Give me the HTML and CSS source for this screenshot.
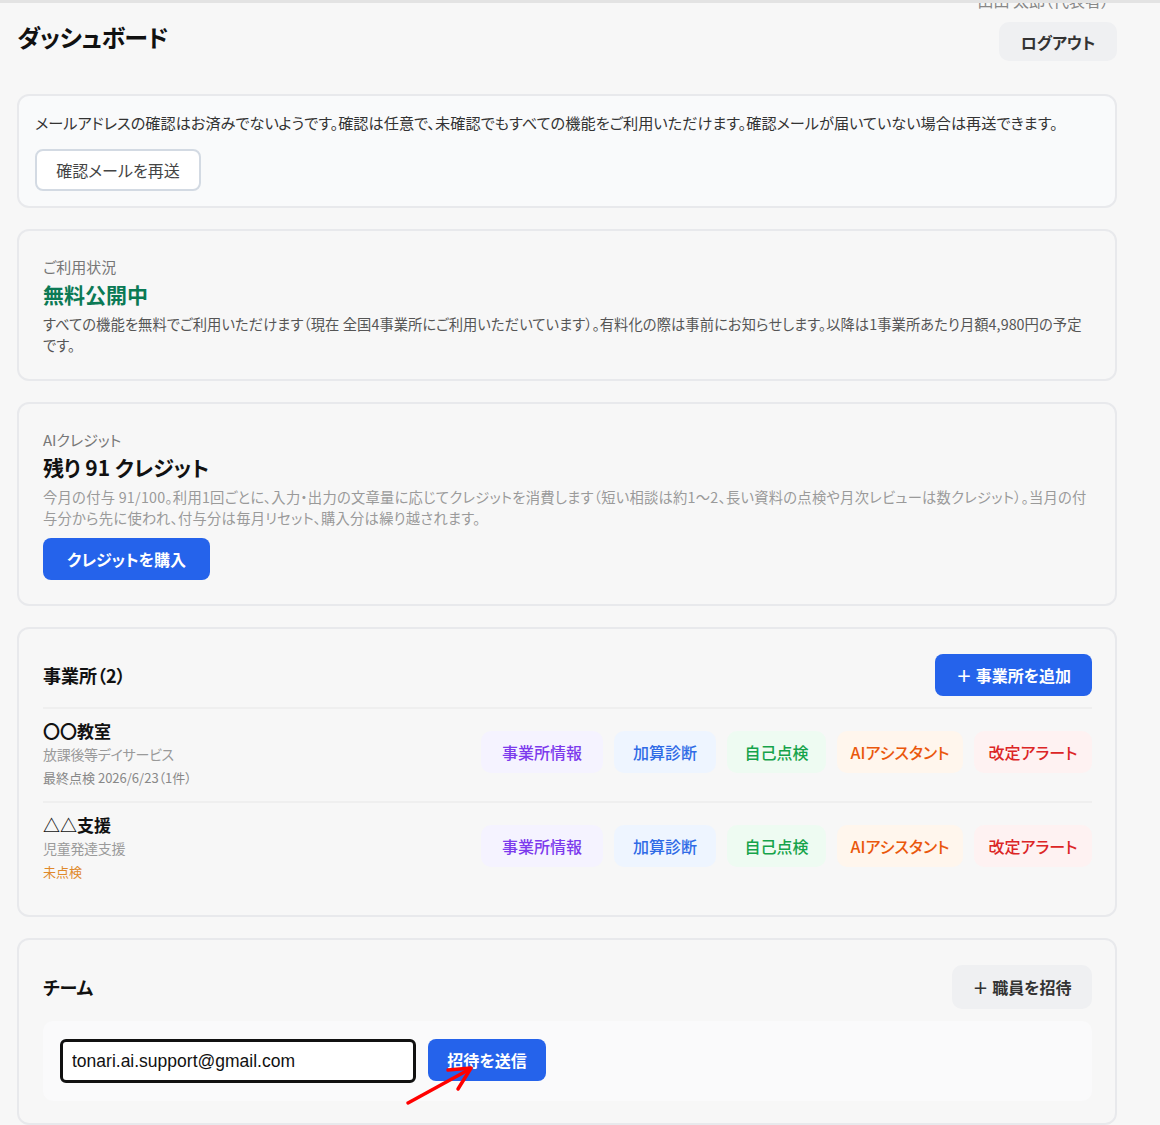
FILE: index.html
```html
<!DOCTYPE html>
<html lang="ja">
<head>
<meta charset="utf-8">
<title>ダッシュボード</title>
<link rel="stylesheet" href="styles.css">
</head>
<body>
<div class="page">
  <header class="header">
    <h1 class="title">ダッシュボード</h1>
    <div class="user">
      <div class="user-name">山田 太郎（代表者）</div>
      <button class="btn btn-gray logout">ログアウト</button>
    </div>
  </header>

  <section class="card card-notice">
    <p class="notice-text">メールアドレスの確認はお済みでないようです。確認は任意で、未確認でもすべての機能をご利用いただけます。確認メールが届いていない場合は再送できます。</p>
    <button class="btn btn-outline">確認メールを再送</button>
  </section>

  <section class="card">
    <div class="label">ご利用状況</div>
    <div class="status">無料公開中</div>
    <p class="desc desc-dark">すべての機能を無料でご利用いただけます（現在 全国4事業所にご利用いただいています）。有料化の際は事前にお知らせします。以降は1事業所あたり月額4,980円の予定です。</p>
  </section>

  <section class="card">
    <div class="label">AIクレジット</div>
    <div class="credits">残り 91 クレジット</div>
    <p class="desc desc-light">今月の付与 91/100。利用1回ごとに、入力・出力の文章量に応じてクレジットを消費します（短い相談は約1〜2、長い資料の点検や月次レビューは数クレジット）。当月の付与分から先に使われ、付与分は毎月リセット、購入分は繰り越されます。</p>
    <button class="btn btn-blue buy">クレジットを購入</button>
  </section>

  <section class="card card-offices">
    <div class="section-head">
      <h2 class="section-title">事業所（2）</h2>
      <button class="btn btn-blue">＋ 事業所を追加</button>
    </div>
    <div class="office">
      <div class="office-info">
        <div class="office-name">〇〇教室</div>
        <div class="office-type">放課後等デイサービス</div>
        <div class="office-meta">最終点検 2026/6/23（1件）</div>
      </div>
      <div class="pills">
        <span class="pill pill-purple">事業所情報</span>
        <span class="pill pill-blue">加算診断</span>
        <span class="pill pill-green">自己点検</span>
        <span class="pill pill-orange">AIアシスタント</span>
        <span class="pill pill-red">改定アラート</span>
      </div>
    </div>
    <div class="office">
      <div class="office-info">
        <div class="office-name">△△支援</div>
        <div class="office-type">児童発達支援</div>
        <div class="office-meta meta-warn">未点検</div>
      </div>
      <div class="pills">
        <span class="pill pill-purple">事業所情報</span>
        <span class="pill pill-blue">加算診断</span>
        <span class="pill pill-green">自己点検</span>
        <span class="pill pill-orange">AIアシスタント</span>
        <span class="pill pill-red">改定アラート</span>
      </div>
    </div>
  </section>

  <section class="card card-team">
    <div class="section-head">
      <h2 class="section-title">チーム</h2>
      <button class="btn btn-gray invite">＋ 職員を招待</button>
    </div>
    <div class="invite-box">
      <input class="invite-input" type="text" value="tonari.ai.support@gmail.com">
      <button class="btn btn-blue send">招待を送信</button>
    </div>
    <svg class="arrow" width="80" height="50" viewBox="0 0 80 50">
      <path d="M4 46 L66 12" stroke="#f00" stroke-width="3.5" fill="none" stroke-linecap="round"/>
      <path d="M44 13 L67 11 L54 32" stroke="#f00" stroke-width="3.5" fill="none" stroke-linecap="round" stroke-linejoin="round"/>
    </svg>
  </section>
</div>
</body>
</html>
```

FILE: styles.css
```css
* { box-sizing: border-box; }
html, body { margin: 0; padding: 0; }
body {
  background: #f7f7f7;
  border-top: 3px solid #e3e3e3;
  font-family: "Noto Sans CJK JP", "Noto Sans", sans-serif;
  font-feature-settings: "palt";
  color: #222;
  overflow: hidden;
  height: 1125px;
}
.page {
  width: 1100px;
  margin-left: 17px;
  display: flex;
  flex-direction: column;
  gap: 21px;
}
.header {
  display: flex;
  justify-content: space-between;
  align-items: flex-start;
  height: 70px;
}
.title {
  margin: 17px 0 0 0;
  font-size: 24px;
  font-weight: 700;
  line-height: 34px;
  color: #111;
  letter-spacing: -0.5px;
}
.user {
  display: flex;
  flex-direction: column;
  align-items: flex-end;
}
.user-name {
  margin-top: -13px;
  margin-right: 8px;
  font-size: 16px;
  line-height: 20px;
  color: #888;
}
.btn {
  font-family: inherit;
  font-feature-settings: "palt";
  border: none;
  border-radius: 8px;
  cursor: pointer;
  font-weight: 700;
  font-size: 16px;
  padding: 0 18px;
  height: 42px;
  white-space: nowrap;
}
.btn-gray {
  background: #eff0f2;
  color: #333;
  border-radius: 10px;
}
.logout {
  margin-top: 12px;
  height: 39px;
  width: 118px;
}
.btn-blue {
  background: #2563eb;
  color: #fff;
}
.btn-outline {
  background: #fff;
  border: 2px solid #d3dae3;
  color: #444;
  font-weight: 400;
  height: 42px;
  width: 166px;
  font-size: 16px;
}
.card {
  background: #f7f7f7;
  border: 2px solid #e8e9ec;
  border-radius: 12px;
  padding: 25px 23px 24px 24px;
}
.card-notice {
  background: #f9fafb;
  padding: 15px 16px 15px 16px;
}
.notice-text {
  margin: 0 0 16px 0;
  font-size: 15.2px;
  line-height: 22px;
  color: #333;
  white-space: nowrap;
}
.label {
  font-size: 15px;
  line-height: 22px;
  color: #777;
}
.status {
  font-size: 21px;
  font-weight: 700;
  line-height: 30px;
  color: #0b7a55;
  margin-top: 1px;
}
.credits {
  font-size: 21px;
  font-weight: 700;
  line-height: 30px;
  color: #111;
  margin-top: 1px;
}
.desc {
  margin: 4px 0 0 0;
  font-size: 14.3px;
  line-height: 21px;
}
.desc-dark { color: #555; letter-spacing: 0.06px; }
.desc-light { color: #9a9a9a; letter-spacing: 0.25px; }
.buy {
  margin-top: 10px;
  width: 167px;
  height: 42px;
}
.section-head {
  display: flex;
  justify-content: space-between;
  align-items: center;
}
.section-title {
  margin: 0;
  font-size: 18px;
  font-weight: 700;
  color: #111;
}
.section-head .btn-blue { width: 157px; }
.card-offices { padding-bottom: 30px; }
.office {
  display: flex;
  justify-content: space-between;
  align-items: center;
  border-top: 2px solid #efefef;
  margin-top: 11px;
  padding-top: 10px;
}
.office + .office { margin-top: 10px; }
.office-name {
  font-size: 17px;
  font-weight: 700;
  line-height: 24px;
  color: #111;
}
.office-type {
  font-size: 14px;
  line-height: 22px;
  color: #9a9a9a;
  letter-spacing: -0.3px;
}
.office-meta {
  font-size: 13px;
  line-height: 26px;
  color: #888;
}
.meta-warn { color: #e0892a; }
.pills {
  display: flex;
  gap: 11px;
  margin-top: -6px;
}
.pill {
  display: flex;
  align-items: center;
  justify-content: center;
  height: 42px;
  border-radius: 10px;
  font-size: 16px;
  font-weight: 500;
  white-space: nowrap;
}
.pill-purple { background: #f5f3ff; color: #7c3aed; width: 122px; }
.pill-blue { background: #eef5ff; color: #2f6be6; width: 102px; }
.pill-green { background: #eefbf2; color: #16a34a; width: 99px; }
.pill-orange { background: #fff6ed; color: #ea580c; width: 126px; }
.pill-red { background: #fef2f2; color: #dc2626; width: 118px; }
.card-team {
  position: relative;
  padding-bottom: 22px;
}
.invite {
  width: 140px;
  height: 44px;
}
.invite-box {
  margin-top: 12px;
  background: #fafafb;
  border-radius: 10px;
  padding: 18px 17px;
  display: flex;
  gap: 12px;
  align-items: flex-start;
}
.invite-input {
  width: 356px;
  height: 44px;
  border: 3px solid #111;
  border-radius: 6px;
  background: #fff;
  font-family: "Liberation Sans", Arial, sans-serif;
  font-size: 17.5px;
  padding: 0 9px;
  color: #111;
}
.send {
  width: 118px;
  height: 42px;
}
.arrow {
  position: absolute;
  left: 385px;
  top: 117px;
}
```
